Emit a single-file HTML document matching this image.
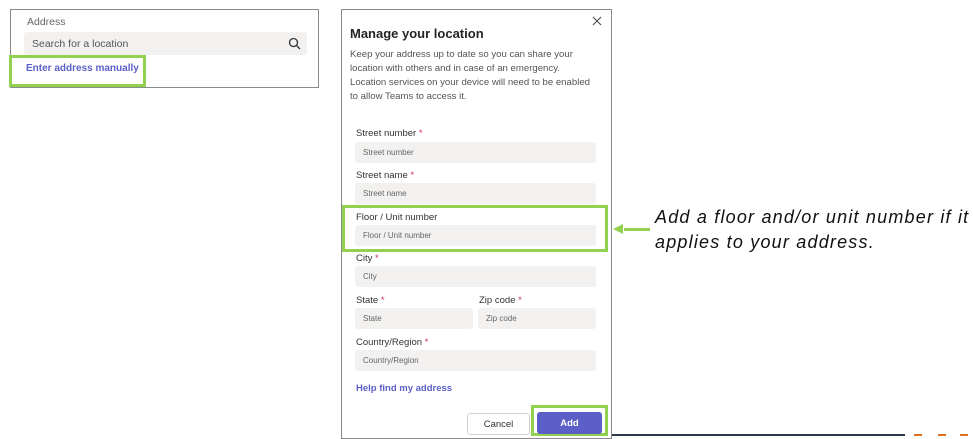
<!DOCTYPE html>
<html><head><style>
*{margin:0;padding:0;box-sizing:border-box}
body{width:973px;height:436px;background:#fff;position:relative;overflow:hidden;font-family:"Liberation Sans",sans-serif}
.a{position:absolute}
.lbl{font-size:9.5px;color:#333}
.in{background:#f2f1f0;border-radius:3px;font-size:8px;color:#666;padding-left:8px;display:flex;align-items:center}
.st{color:#c4314b}
</style></head><body>
<div class="a" style="left:10px;top:9px;width:309px;height:79px;border:1px solid #8a8a8a"></div>
<div class="a lbl" style="left:27px;top:16px;font-size:10.5px;color:#666">Address</div>
<div class="a in" style="left:24px;top:32px;width:283px;height:23px;font-size:10.5px;color:#555">Search for a location</div>
<svg class="a" style="left:288px;top:37px" width="13" height="13" viewBox="0 0 13 13"><circle cx="5.5" cy="5.5" r="4" fill="none" stroke="#333" stroke-width="1.3"/><path d="M8.5 8.5L12 12" stroke="#333" stroke-width="1.3"/></svg>
<div class="a" style="left:9px;top:55px;width:137px;height:32px;border:3px solid #92d050"></div>
<div class="a" style="left:26px;top:63px;font-size:10px;font-weight:bold;color:#5b5fc7">Enter address manually</div>

<div class="a" style="left:341px;top:9px;width:271px;height:430px;border:1px solid #8a8a8a"></div>
<svg class="a" style="left:592px;top:16px" width="10" height="10" viewBox="0 0 10 10"><path d="M1 1L9 9M9 1L1 9" stroke="#444" stroke-width="1"/></svg>
<div class="a" style="left:350px;top:26px;font-size:13px;font-weight:bold;color:#242424">Manage your location</div>
<div class="a" style="left:350px;top:48px;font-size:9.6px;line-height:14px;color:#555;white-space:nowrap">Keep your address up to date so you can share your<br>location with others and in case of an emergency.<br>Location services on your device will need to be enabled<br>to allow Teams to access it.</div>

<div class="a lbl" style="left:356px;top:128px">Street number <span class="st">*</span></div>
<div class="a in" style="left:355px;top:142px;width:241px;height:21px">Street number</div>
<div class="a lbl" style="left:356px;top:170px">Street name <span class="st">*</span></div>
<div class="a in" style="left:355px;top:183px;width:241px;height:21px">Street name</div>
<div class="a" style="left:342px;top:205px;width:266px;height:47px;border:3px solid #92d050"></div>
<div class="a lbl" style="left:356px;top:212px">Floor / Unit number</div>
<div class="a in" style="left:355px;top:225px;width:241px;height:21px">Floor / Unit number</div>
<div class="a lbl" style="left:356px;top:253px">City <span class="st">*</span></div>
<div class="a in" style="left:355px;top:266px;width:241px;height:21px">City</div>
<div class="a lbl" style="left:356px;top:295px">State <span class="st">*</span></div>
<div class="a in" style="left:355px;top:308px;width:118px;height:21px">State</div>
<div class="a lbl" style="left:479px;top:295px">Zip code <span class="st">*</span></div>
<div class="a in" style="left:478px;top:308px;width:118px;height:21px">Zip code</div>
<div class="a lbl" style="left:356px;top:337px">Country/Region <span class="st">*</span></div>
<div class="a in" style="left:355px;top:350px;width:241px;height:21px">Country/Region</div>
<div class="a" style="left:356px;top:383px;font-size:9.5px;font-weight:bold;color:#5b5fc7">Help find my address</div>
<div class="a" style="left:467px;top:413px;width:63px;height:22px;border:1px solid #d1d1d1;border-radius:3px;font-size:9.5px;color:#333;display:flex;align-items:center;justify-content:center">Cancel</div>
<div class="a" style="left:531px;top:405px;width:77px;height:31px;border:3px solid #92d050"></div>
<div class="a" style="left:537px;top:412px;width:65px;height:22px;background:#5b5fc7;border-radius:3px;font-size:9.5px;font-weight:bold;color:#fff;display:flex;align-items:center;justify-content:center">Add</div>

<div class="a" style="left:624px;top:228px;width:26px;height:3px;background:#92d050"></div>
<div class="a" style="left:613px;top:224px;width:0;height:0;border-top:5px solid transparent;border-bottom:5px solid transparent;border-right:10px solid #92d050"></div>
<div class="a" style="left:655px;top:205px;font-size:18px;font-style:italic;color:#111;line-height:25px;letter-spacing:1.2px;white-space:nowrap">Add a floor and/or unit number if it<br>applies to your address.</div>

<div class="a" style="left:612px;top:434px;width:293px;height:2px;background:#2b3a4a"></div>
<div class="a" style="left:914px;top:434px;width:8px;height:2px;background:#e07020"></div>
<div class="a" style="left:938px;top:434px;width:8px;height:2px;background:#e07020"></div>
<div class="a" style="left:960px;top:434px;width:8px;height:2px;background:#e07020"></div>
</body></html>
